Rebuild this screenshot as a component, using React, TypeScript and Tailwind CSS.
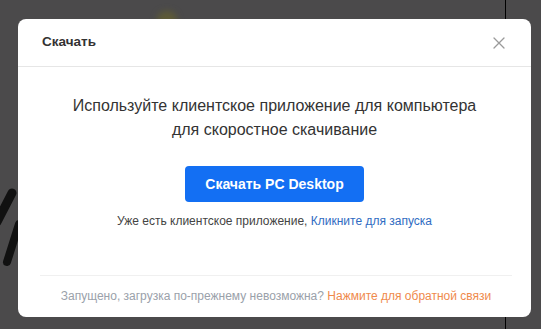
import React from 'react';

function CloseIcon() {
  return (
    <svg width="12" height="12" viewBox="0 0 12 12" fill="none">
      <path d="M1 1L11 11M11 1L1 11" stroke="#9a9a9a" strokeWidth="1.3" strokeLinecap="round" />
    </svg>
  );
}

export default function App() {
  return (
    <div
      className="relative h-[329px] w-[541px] overflow-hidden bg-[#4b4a4b] pl-[18px] pt-[19px]"
      style={{ fontFamily: '"Liberation Sans", Arial, sans-serif' }}
    >
      {/* blurred page behind the overlay */}
      <div className="absolute left-[157px] top-[11px] h-[18px] w-[20px] rounded-full bg-[#5d5a37] blur-[3px]" />
      <div className="absolute left-[505px] top-0 h-full w-px bg-black" />
      <svg className="absolute left-0 top-[180px]" width="30" height="90" viewBox="0 0 30 90">
        <path d="M-3 42 L12 13" stroke="#111" strokeWidth="9" strokeLinecap="round" />
        <path d="M7 82 L19 44" stroke="#111" strokeWidth="8" strokeLinecap="round" />
      </svg>

      {/* modal */}
      <div className="relative flex h-[298px] w-[513px] flex-col rounded-[8px] bg-white">
        <div className="flex h-[48px] items-center justify-between border-b border-[#e6e6e6] pl-[24px] pr-[26px]">
          <span className="text-[13.5px] font-bold text-[#333]">Скачать</span>
          <CloseIcon />
        </div>

        <div className="flex flex-1 flex-col items-center pt-[27px]">
          <p className="text-center text-[16px] leading-[24px] text-[#333]">
            Используйте клиентское приложение для компьютера
            <br />
            для скоростное скачивание
          </p>
          <button className="mt-[24px] h-[36px] w-[179px] rounded-[4px] bg-[#136ff3] text-[14px] font-bold text-white">
            Скачать PC Desktop
          </button>
          <p className="mt-[10px] text-[12px] leading-[18px] text-[#444]">
            Уже есть клиентское приложение, <span className="text-[#2f6cc2]">Кликните для запуска</span>
          </p>
        </div>

        <div className="ml-[22px] mr-[19px] border-t border-[#f0f0f0] pb-[12px] pt-[11px] text-center text-[12px] leading-[18px] text-[#9aa1aa]">
          Запущено, загрузка по-прежнему невозможна? <span className="text-[#ef8a4c]">Нажмите для обратной связи</span>
        </div>
      </div>
    </div>
  );
}
